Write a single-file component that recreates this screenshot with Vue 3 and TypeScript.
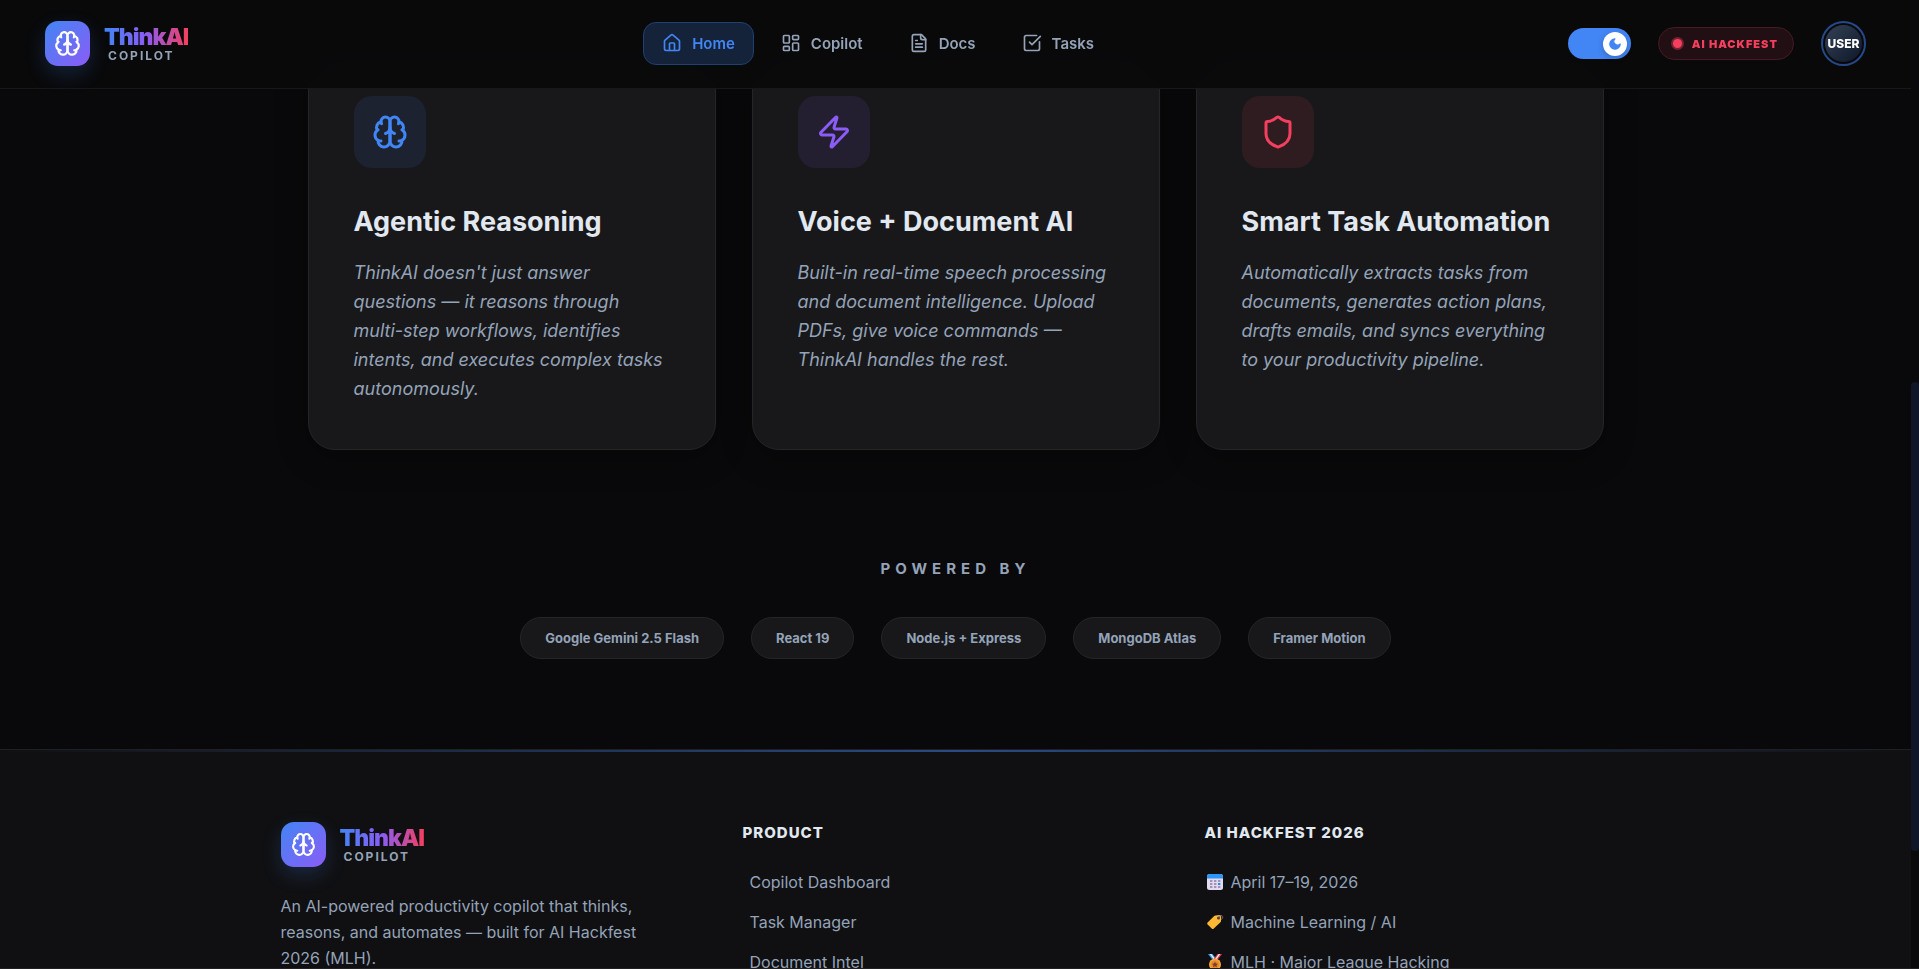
<script setup lang="ts">
import { ref, h, type FunctionalComponent } from 'vue'

const icons: Record<string, string[]> = {
  brain: [
    'M12 5a3 3 0 1 0-5.997.125 4 4 0 0 0-2.526 5.77 4 4 0 0 0 .556 6.588A4 4 0 1 0 12 18Z',
    'M12 5a3 3 0 1 1 5.997.125 4 4 0 0 1 2.526 5.77 4 4 0 0 1-.556 6.588A4 4 0 1 1 12 18Z',
    'M15 13a4.5 4.5 0 0 1-3-4 4.5 4.5 0 0 1-3 4',
    'M17.599 6.5a3 3 0 0 0 .399-1.375',
    'M6.003 5.125A3 3 0 0 0 6.401 6.5',
    'M3.477 10.896a4 4 0 0 1 .585-.396',
    'M19.938 10.5a4 4 0 0 1 .585.396',
    'M6 18a4 4 0 0 1-1.967-.516',
    'M19.967 17.484A4 4 0 0 1 18 18',
  ],
  home: [
    'M15 21v-8a1 1 0 0 0-1-1h-4a1 1 0 0 0-1 1v8',
    'M3 10a2 2 0 0 1 .709-1.528l7-5.999a2 2 0 0 1 2.582 0l7 5.999A2 2 0 0 1 21 10v9a2 2 0 0 1-2 2H5a2 2 0 0 1-2-2z',
  ],
  dashboard: [
    'M4 3h5a1 1 0 0 1 1 1v7a1 1 0 0 1-1 1H4a1 1 0 0 1-1-1V4a1 1 0 0 1 1-1z',
    'M15 3h5a1 1 0 0 1 1 1v3a1 1 0 0 1-1 1h-5a1 1 0 0 1-1-1V4a1 1 0 0 1 1-1z',
    'M15 12h5a1 1 0 0 1 1 1v7a1 1 0 0 1-1 1h-5a1 1 0 0 1-1-1v-7a1 1 0 0 1 1-1z',
    'M4 16h5a1 1 0 0 1 1 1v3a1 1 0 0 1-1 1H4a1 1 0 0 1-1-1v-3a1 1 0 0 1 1-1z',
  ],
  file: [
    'M15 2H6a2 2 0 0 0-2 2v16a2 2 0 0 0 2 2h12a2 2 0 0 0 2-2V7Z',
    'M14 2v4a2 2 0 0 0 2 2h4',
    'M10 9H8',
    'M16 13H8',
    'M16 17H8',
  ],
  check: [
    'M21 10.5V19a2 2 0 0 1-2 2H5a2 2 0 0 1-2-2V5a2 2 0 0 1 2-2h12.5',
    'm9 11 3 3L22 4',
  ],
  zap: [
    'M4 14a1 1 0 0 1-.78-1.63l9.9-10.2a.5.5 0 0 1 .86.46l-1.92 6.02A1 1 0 0 0 13 10h7a1 1 0 0 1 .78 1.63l-9.9 10.2a.5.5 0 0 1-.86-.46l1.92-6.02A1 1 0 0 0 11 14z',
  ],
  shield: [
    'M20 13c0 5-3.5 7.5-7.66 8.95a1 1 0 0 1-.67-.01C7.5 20.5 4 18 4 13V6a1 1 0 0 1 1-1c2 0 4.5-1.2 6.24-2.72a1.17 1.17 0 0 1 1.52 0C14.51 3.81 17 5 19 5a1 1 0 0 1 1 1z',
  ],
}

const Icon: FunctionalComponent<{ name: string; size: number }> = (props) =>
  h(
    'svg',
    {
      width: props.size,
      height: props.size,
      viewBox: '0 0 24 24',
      fill: 'none',
      stroke: 'currentColor',
      'stroke-width': 2,
      'stroke-linecap': 'round',
      'stroke-linejoin': 'round',
      'aria-hidden': 'true',
    },
    icons[props.name].map((d) => h('path', { d })),
  )
Icon.props = ['name', 'size']

const darkMode = ref(true)

const navLinks = [
  { label: 'Home', icon: 'home', active: true },
  { label: 'Copilot', icon: 'dashboard', active: false },
  { label: 'Docs', icon: 'file', active: false },
  { label: 'Tasks', icon: 'check', active: false },
]

const features = [
  {
    icon: 'brain',
    tone: 'blue',
    title: 'Agentic Reasoning',
    text: "ThinkAI doesn't just answer questions — it reasons through multi-step workflows, identifies intents, and executes complex tasks autonomously.",
  },
  {
    icon: 'zap',
    tone: 'violet',
    title: 'Voice + Document AI',
    text: 'Built-in real-time speech processing and document intelligence. Upload PDFs, give voice commands — ThinkAI handles the rest.',
  },
  {
    icon: 'shield',
    tone: 'rose',
    title: 'Smart Task Automation',
    text: 'Automatically extracts tasks from documents, generates action plans, drafts emails, and syncs everything to your productivity pipeline.',
  },
]

const stack = ['Google Gemini 2.5 Flash', 'React 19', 'Node.js + Express', 'MongoDB Atlas', 'Framer Motion']
const productLinks = ['Copilot Dashboard', 'Task Manager', 'Document Intel']
</script>

<template>
  <div class="page">
    <header class="topbar">
      <a class="brand" href="#">
        <span class="brand-mark"><Icon name="brain" :size="27" /></span>
        <span class="brand-text">
          <span class="brand-name">ThinkAI</span>
          <span class="brand-sub">COPILOT</span>
        </span>
      </a>

      <nav class="nav" aria-label="Main">
        <a
          v-for="link in navLinks"
          :key="link.label"
          href="#"
          class="nav-link"
          :class="{ active: link.active }"
        >
          <Icon :name="link.icon" :size="20" />
          {{ link.label }}
        </a>
      </nav>

      <div class="actions">
        <label class="toggle">
          <input v-model="darkMode" type="checkbox" aria-label="Dark mode" />
          <span class="knob">
            <svg width="14" height="14" viewBox="0 0 24 24" aria-hidden="true">
              <path
                d="M12 3a6 6 0 0 0 9 9 9 9 0 1 1-9-9Z"
                fill="currentColor"
                stroke="currentColor"
                stroke-width="2"
                stroke-linejoin="round"
              />
            </svg>
          </span>
        </label>
        <span class="event-badge"><span class="pulse"></span>AI HACKFEST</span>
        <button class="avatar" type="button"><span>USER</span></button>
      </div>
    </header>

    <main>
      <section class="features">
        <article v-for="item in features" :key="item.title" class="card">
          <div class="card-icon" :class="item.tone"><Icon :name="item.icon" :size="36" /></div>
          <h3>{{ item.title }}</h3>
          <p>{{ item.text }}</p>
        </article>
      </section>

      <section class="powered">
        <h2>POWERED BY</h2>
        <ul class="chips">
          <li v-for="name in stack" :key="name">{{ name }}</li>
        </ul>
      </section>
    </main>

    <footer class="footer">
      <div class="footer-grid">
        <div>
          <a class="brand" href="#">
            <span class="brand-mark"><Icon name="brain" :size="25" /></span>
            <span class="brand-text">
              <span class="brand-name">ThinkAI</span>
              <span class="brand-sub">COPILOT</span>
            </span>
          </a>
          <p class="about">
            An AI-powered productivity copilot that thinks, reasons, and automates — built for AI
            Hackfest 2026 (MLH).
          </p>
        </div>
        <div>
          <h4>PRODUCT</h4>
          <ul class="links">
            <li v-for="name in productLinks" :key="name"><a href="#">{{ name }}</a></li>
          </ul>
        </div>
        <div>
          <h4>AI HACKFEST 2026</h4>
          <ul class="facts">
            <li>
              <svg width="18" height="18" viewBox="0 0 18 18" aria-hidden="true">
                <rect x="1" y="1" width="16" height="16" rx="2.5" fill="#e3d9f0" />
                <path d="M1 5.500V3.500A2.500 2.500 0 0 1 3.500 1h11A2.500 2.500 0 0 1 17 3.500v2z" fill="#2b96f5" />
                <g fill="#a094b4">
                  <rect x="4" y="7" width="2.400" height="2" /><rect x="8" y="7" width="2.400" height="2" /><rect x="12" y="7" width="2.400" height="2" />
                  <rect x="4" y="10" width="2.400" height="2" /><rect x="8" y="10" width="2.400" height="2" />
                  <rect x="4" y="13" width="2.400" height="2" /><rect x="8" y="13" width="2.400" height="2" /><rect x="12" y="13" width="2.400" height="2" />
                </g>
                <rect x="12" y="10" width="2.400" height="2" fill="#1f8df2" />
              </svg>
              April 17–19, 2026
            </li>
            <li>
              <svg width="18" height="18" viewBox="0 0 18 18" aria-hidden="true">
                <path d="M9.500 2.500 13.500 2a1.500 1.500 0 0 1 1.700 1.500L15 8a2 2 0 0 1-.6 1.300l-6.600 6.200a1.500 1.500 0 0 1-2.100 0L1.600 11.600a1.500 1.500 0 0 1 0-2.100L8.200 3.100a2 2 0 0 1 1.300-.6z" fill="#fdb733" />
                <circle cx="12.500" cy="5" r="1.500" fill="#4c3a35" />
                <path d="M12.500 4.800c.8-2.600 3.900-3 4.200-1 .2 1.400-.8 2.600-1.700 2.800" fill="none" stroke="#7d6370" stroke-width="1" />
              </svg>
              Machine Learning / AI
            </li>
            <li>
              <svg width="18" height="18" viewBox="0 0 18 18" aria-hidden="true">
                <path d="M2 1h4.500l5 6.500H7z" fill="#3d9bf2" />
                <path d="M3.800 1h1.500l4.500 6H8.200z" fill="#f2f1fa" />
                <path d="M16 1h-4.500l-5 6.500H11z" fill="#e8385b" />
                <path d="M14.200 1h-1.500L8.500 7h1.600z" fill="#f2f1fa" />
                <circle cx="9" cy="11.500" r="6" fill="#f5a433" />
                <circle cx="9" cy="11.500" r="4.300" fill="#e58b2a" />
                <path d="m9 8.500.9 1.900 2.100.3-1.500 1.500.4 2.100-1.900-1-1.900 1 .4-2.100L6 10.700l2.100-.3z" fill="#7b3f30" />
              </svg>
              MLH · Major League Hacking
            </li>
          </ul>
        </div>
      </div>
    </footer>

    <div class="rail" aria-hidden="true"><div class="rail-thumb"></div></div>
  </div>
</template>

<style>
body {
  background: #09090b;
}
</style>

<style scoped>
.page {
  box-sizing: border-box;
  height: 100vh;
  overflow: hidden;
  padding-right: 8px;
  border-bottom: 1px solid #202023;
  background: #09090b;
  color: #e2e8f0;
  font-family: Inter, 'Liberation Sans', sans-serif;
}

.page *,
.page *::before {
  box-sizing: border-box;
}

h2,
h3,
h4,
p,
ul {
  margin: 0;
  padding: 0;
}

ul {
  list-style: none;
}

a {
  color: inherit;
  text-decoration: none;
}

svg {
  display: block;
  flex: none;
}

/* Top bar */
.topbar {
  position: fixed;
  z-index: 2;
  top: 0;
  left: 0;
  right: 8px;
  height: 89px;
  padding: 0 45px 1px;
  display: flex;
  align-items: center;
  justify-content: space-between;
  background: rgba(9, 9, 11, 0.95);
  backdrop-filter: blur(20px);
  border-bottom: 1px solid #18181b;
}

.brand {
  display: flex;
  align-items: center;
  gap: 14px;
  width: fit-content;
}

.brand-mark {
  display: grid;
  place-items: center;
  width: 45px;
  height: 45px;
  border-radius: 13px;
  color: #fff;
  background: linear-gradient(135deg, #4285f4, #8b5cf6);
  box-shadow: 0 8px 20px rgba(66, 133, 244, 0.2);
}

.brand-text {
  display: flex;
  flex-direction: column;
  gap: 1px;
}

.brand-name {
  font-size: 23px;
  line-height: 24px;
  font-weight: 900;
  letter-spacing: -1px;
  background: linear-gradient(90deg, #4285f4, #8b5cf6 50%, #f43f5e);
  background-clip: text;
  -webkit-background-clip: text;
  color: transparent;
}

.brand-sub {
  margin-left: 4px;
  font-size: 12px;
  line-height: 12px;
  font-weight: 700;
  letter-spacing: 2px;
  color: #94a3b8;
}

.nav {
  display: flex;
  gap: 8px;
}

.nav-link {
  display: flex;
  align-items: center;
  gap: 10px;
  height: 43px;
  padding: 0 18px 1px;
  border: 1px solid transparent;
  border-radius: 13px;
  font-size: 15px;
  font-weight: 600;
  color: #94a3b8;
}

.nav-link.active {
  color: #4285f4;
  background: #15233a;
  border-color: #203f73;
}

.actions {
  display: flex;
  align-items: center;
  gap: 27px;
}

.toggle {
  display: flex;
  align-items: center;
  width: 63px;
  height: 31px;
  padding: 0 4px;
  border-radius: 16px;
  background: #334155;
  cursor: pointer;
}

.toggle:has(input:checked) {
  justify-content: flex-end;
  background: #4285f4;
}

.toggle input {
  position: absolute;
  opacity: 0;
  pointer-events: none;
}

.knob {
  display: grid;
  place-items: center;
  width: 24px;
  height: 24px;
  border-radius: 50%;
  background: #fff;
  color: #4285f4;
  box-shadow: 0 2px 6px rgba(0, 0, 0, 0.2);
}

.event-badge {
  display: flex;
  align-items: center;
  gap: 8px;
  height: 33px;
  padding: 0 15px 0 12px;
  border: 1px solid #471a25;
  border-radius: 17px;
  background: #210f14;
  color: #f43f5e;
  font-size: 11px;
  font-weight: 900;
  letter-spacing: 1px;
}

.pulse {
  width: 9px;
  height: 9px;
  margin: 0 2px;
  border-radius: 50%;
  background: #f43f5e;
  box-shadow: 0 0 0 2px rgba(244, 63, 94, 0.4);
}

.avatar {
  display: flex;
  width: 45px;
  height: 45px;
  padding: 2px;
  border: 2px solid #25488a;
  border-radius: 50%;
  background: none;
  font-family: inherit;
}

.avatar span {
  flex: 1;
  align-self: stretch;
  display: grid;
  place-items: center;
  border-radius: 50%;
  background: linear-gradient(135deg, #334155, #0f172a);
  color: #fff;
  font-size: 12px;
  font-weight: 800;
}

/* Feature cards */
main {
  padding: 50px 24px 90px;
}

.features {
  display: grid;
  grid-template-columns: repeat(3, 1fr);
  gap: 36px;
  max-width: 1296px;
  margin: 0 auto;
}

.card {
  padding: 45px 45px 46px;
  border: 1px solid #252527;
  border-radius: 27px;
  background: #18181a;
  box-shadow: 0 8px 32px rgba(0, 0, 0, 0.3);
}

.card-icon {
  display: grid;
  place-items: center;
  width: 72px;
  height: 72px;
  margin-bottom: 38px;
  border-radius: 18px;
}

.card-icon.blue {
  color: #4285f4;
  background: #1c2230;
}

.card-icon.violet {
  color: #8b5cf6;
  background: #241f30;
}

.card-icon.rose {
  color: #f43f5e;
  background: #2e1c20;
}

.card h3 {
  margin-bottom: 20px;
  font-size: 27px;
  line-height: 32px;
  font-weight: 700;
}

.card p {
  font-size: 18px;
  line-height: 29px;
  font-style: italic;
  color: #94a3b8;
}

/* Stack */
.powered {
  margin-top: 108px;
}

.powered h2 {
  margin-bottom: 37px;
  text-align: center;
  font-size: 15px;
  line-height: 22px;
  font-weight: 700;
  letter-spacing: 5px;
  color: #94a3b8;
}

.chips {
  display: flex;
  flex-wrap: wrap;
  justify-content: center;
  gap: 27px;
}

.chips li {
  height: 42px;
  padding: 0 24px;
  border: 1px solid #252527;
  border-radius: 21px;
  background: #18181a;
  color: #94a3b8;
  font-size: 13px;
  line-height: 40px;
  font-weight: 700;
}

/* Footer */
.footer {
  position: relative;
  padding: 72px 24px;
  border-top: 1px solid #202022;
  background: #101012;
}

.footer::before {
  content: '';
  position: absolute;
  inset: 0 0 auto;
  height: 2px;
  background: linear-gradient(90deg, transparent, #4285f4, transparent);
  opacity: 0.5;
}

.footer-grid {
  display: grid;
  grid-template-columns: repeat(3, 1fr);
  gap: 36px;
  max-width: 1350px;
  margin: 0 auto;
}

.about {
  max-width: 360px;
  margin-top: 26px;
  font-size: 16px;
  line-height: 26px;
  color: #94a3b8;
}

.footer h4 {
  margin-bottom: 28px;
  font-size: 15px;
  line-height: 22px;
  font-weight: 800;
  letter-spacing: 1px;
}

.links,
.facts {
  display: grid;
  gap: 20px;
  font-size: 16px;
  line-height: 20px;
  color: #94a3b8;
}

.links {
  padding-left: 7px;
}

.facts li {
  display: flex;
  align-items: center;
  gap: 7px;
  padding-left: 1px;
}

/* Scroll position rail */
.rail {
  position: fixed;
  top: 0;
  right: 0;
  bottom: 1px;
  width: 8px;
  padding-top: 382px;
  background: #09090b;
}

.rail-thumb {
  height: 80%;
  border-radius: 4px;
  background: #0f1627;
}
</style>
